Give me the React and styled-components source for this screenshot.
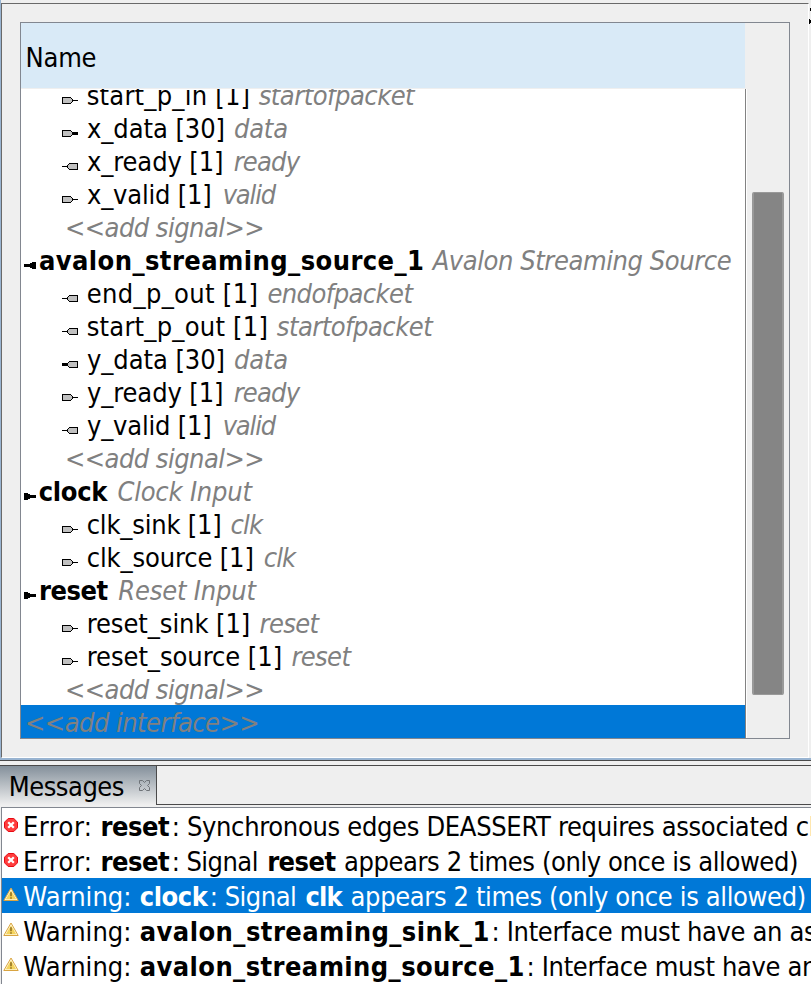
import React from "react";
import styled, { createGlobalStyle, css } from "styled-components";

const GlobalStyle = createGlobalStyle`
  * { box-sizing: border-box; }
  body {
    margin: 0;
    background: #efefef;
    color: #000;
    font-family: "DejaVu Sans Condensed", "DejaVu Sans", Tahoma, sans-serif;
    font-size: 27px;
    overflow: hidden;
  }
  svg { display: block; flex: none; }
`;

const Window = styled.div`
  position: relative;
  display: flex;
  flex-direction: column;
  width: 811px;
  height: 984px;
  overflow: hidden;
  background: #efefef;
`;

/* ---------- interface editor ---------- */

const EditorFrame = styled.section`
  display: flex;
  height: 760px;
  padding-top: 3px;
  border-left: 1px solid #99b4d1;
  border-bottom: 2px solid #99b4d1;
`;

const EditorPane = styled.div`
  width: 808px;
  padding: 18px 18px 0;
  border-top: 1px solid #696969;
  border-left: 1px solid #696969;
  border-right: 1px solid #fff;
  border-bottom: 1px solid #fff;
`;

const TreeTable = styled.div`
  display: flex;
  width: 770px;
  height: 717px;
  border: 1px solid #828790;
`;

const TreeColumn = styled.div`
  display: flex;
  flex-direction: column;
  width: 724px;
`;

const ColumnHeader = styled.div`
  height: 66px;
  padding: 1px 0 0 4.6px;
  line-height: 68px;
  background: #d9eaf7;
  border-bottom: 1px solid #efefef;
`;

const TreeBody = styled.div`
  display: flex;
  flex-direction: column;
  justify-content: flex-end;
  flex: 1;
  width: 725px;
  overflow: hidden;
  background: #fff;
  border-right: 1px solid #828282;
`;

const TreeRow = styled.div`
  display: flex;
  flex: none;
  align-items: flex-start;
  height: 33px;
  padding-left: ${(p) => p.$indent}px;
  line-height: 35px;
  background: ${(p) => (p.$selected ? "#0078d7" : "transparent")};
`;

const IconSlot = styled.span`
  flex: none;
  width: ${(p) => p.$width}px;
  padding-top: 19px;
`;

const Run = styled.span`
  flex: none;
  white-space: pre;
  margin-left: ${(p) => p.$gap || 0}px;
  letter-spacing: ${(p) => p.$track || 0}px;
  ${(p) => p.$kind === "bold" && css`font-weight: 700;`}
  ${(p) => p.$kind === "hint" && css`font-style: italic; color: #808080;`}
`;

const ScrollTrack = styled.div`
  flex: 1;
  margin: 66px 0 0 1px;
  padding: 103px 5px 0;
  border-left: 1px solid #fff;
`;

const ScrollThumb = styled.div`
  width: 32px;
  height: 503px;
  background: #858585;
  border: solid #999;
  border-width: 1px 2px;
  border-radius: 2px;
`;

/* Clipped cursor tip at the window's right edge. */
const EdgeGlyph = styled.svg`
  position: absolute;
  top: 7px;
  right: 0;
`;

/* ---------- messages ---------- */

const Divider = styled.div`
  height: 6px;
  border-top: 1px solid #4a4a4a;
  border-bottom: 1px solid #4a4a4a;
`;

const TabBar = styled.div`
  display: flex;
  height: 41px;
`;

const Tab = styled.div`
  display: flex;
  align-items: flex-start;
  width: 157px;
  height: 39px;
  padding-left: 8.8px;
  line-height: 41px;
  background: linear-gradient(#84909b, #efefef);
  border-right: 1px solid #4a4a4a;
`;

const TabCloseIcon = styled.svg`
  margin: 14px 0 0 15px;
`;

const TabFill = styled.div`
  flex: 1;
  height: 39px;
  border-bottom: 1px solid #4a4a4a;
`;

const MessageList = styled.div`
  flex: 1;
  margin-left: 1px;
  background: #fff;
  border-top: 1px solid #828790;
  border-left: 1px solid #828790;
  overflow: hidden;
`;

const MessageRow = styled.div`
  display: flex;
  height: 35px;
  line-height: 37px;
  color: ${(p) => (p.$selected ? "#fff" : "#000")};
  background: ${(p) => (p.$selected ? "#0078d7" : "transparent")};
`;

const StatusSlot = styled.span`
  flex: none;
  width: 21px;
  padding: ${(p) => (p.$level === "error" ? "10px 0 0 2px" : "9px 0 0 1px")};
`;

function PortIcon({ output, bus }) {
  return (
    <svg width="16" height="7" shapeRendering="crispEdges">
      <g transform={output ? "translate(16 0) scale(-1 1)" : undefined}>
        <path d="M0 0H9V1H10V2H11V5H10V6H9V7H0Z" fill="#000" />
        <path d="M1 1H9V2H10V5H9V6H1Z" fill="#c0c0c0" />
        <rect x="11" y={bus ? 2 : 3} width="5" height={bus ? 3 : 1} />
      </g>
    </svg>
  );
}

function InterfaceIcon({ source }) {
  return (
    <svg width="12" height="7" shapeRendering="crispEdges">
      <path
        d="M0 0H4V1H6V2H12V5H6V6H4V7H0Z"
        transform={source ? "translate(12 0) scale(-1 1)" : undefined}
      />
    </svg>
  );
}

function ErrorIcon() {
  return (
    <svg width="14" height="14" viewBox="0 0 14 14">
      <path d="M4.2 .5H9.8L13.5 4.2V9.8L9.8 13.5H4.2L.5 9.8V4.2Z" fill="#ff3c3c" stroke="#e60a14" />
      <path d="M4.2 4.2L9.8 9.8M9.8 4.2L4.2 9.8" stroke="#fff" strokeWidth="2.3" />
    </svg>
  );
}

function WarningIcon() {
  return (
    <svg width="16" height="15" viewBox="0 0 16 15">
      <path d="M8 1L15.2 13.5H.8Z" fill="#fff7d6" stroke="#d9a441" strokeLinejoin="round" />
      <path d="M8 3.6L13.2 12.3H2.8Z" fill="#f4d35c" />
      <path d="M8 5.2V9.3M8 10.2V11.8" stroke="#8a6a1c" strokeWidth="1.5" />
    </svg>
  );
}

const ROWS = [
  { port: {}, runs: [["start_p_in [1]", 0.22, "", 0.7], ["startofpacket", -0.52, "hint", 8.4]] },
  { port: { bus: true }, runs: [["x_data [30]", -0.08, "", 1], ["data", -0.2, "hint", 9]] },
  { port: { output: true }, runs: [["x_ready [1]", -0.12, "", 1], ["ready", -0.8, "hint", 10.3]] },
  { port: {}, runs: [["x_valid [1]", -0.2, "", 1], ["valid", -1.15, "hint", 11]] },
  { indent: 44, runs: [["<<add signal>>", -0.55, "hint"]] },
  { group: { source: true }, runs: [["avalon_streaming_source_1", 0.43, "bold", 0.4], ["Avalon Streaming Source", -0.42, "hint", 8.2]] },
  { port: { output: true }, runs: [["end_p_out [1]", 0.32, "", 0.7], ["endofpacket", -0.58, "hint", 9.2]] },
  { port: { output: true }, runs: [["start_p_out [1]", 0.22, "", 0.7], ["startofpacket", -0.52, "hint", 8.6]] },
  { port: { output: true, bus: true }, runs: [["y_data [30]", -0.08, "", 1], ["data", -0.2, "hint", 9]] },
  { port: {}, runs: [["y_ready [1]", -0.12, "", 1], ["ready", -0.8, "hint", 10.3]] },
  { port: { output: true }, runs: [["y_valid [1]", -0.2, "", 1], ["valid", -1.15, "hint", 11]] },
  { indent: 44, runs: [["<<add signal>>", -0.55, "hint"]] },
  { group: {}, runs: [["clock", -0.35, "bold", 0.3], ["Clock Input", -0.2, "hint", 10.4]] },
  { port: {}, runs: [["clk_sink [1]", -0.2, "", 0.7], ["clk", -0.9, "hint", 9]] },
  { port: {}, runs: [["clk_source [1]", -0.14, "", 0.7], ["clk", -0.9, "hint", 10]] },
  { group: {}, runs: [["reset", -0.48, "bold", 0.5], ["Reset Input", -0.17, "hint", 10.6]] },
  { port: {}, runs: [["reset_sink [1]", -0.08, "", 0.7], ["reset", -0.65, "hint", 9.4]] },
  { port: {}, runs: [["reset_source [1]", -0.06, "", 0.7], ["reset", -0.65, "hint", 9.4]] },
  { indent: 44, runs: [["<<add signal>>", -0.55, "hint"]] },
  { indent: 4, selected: true, runs: [["<<add interface>>", -0.53, "hint"]] },
];

const MESSAGES = [
  { level: "error", runs: [["Error:", 0.45], ["reset", -0.5, "bold", 8], [": Synchronous edges DEASSERT requires associated clock", -0.32, "", 2.6]] },
  { level: "error", runs: [["Error:", 0.45], ["reset", -0.5, "bold", 8], [": Signal", -0.54, "", 2.6], ["reset", -0.5, "bold", 9.3], ["appears 2 times (only once is allowed)", -0.4, "", 8.3]] },
  { level: "warning", selected: true, runs: [["Warning:", 0.05, "", 0.3], ["clock", -0.5, "bold", 8.3], [": Signal", -0.5, "", 2.5], ["clk", -0.9, "bold", 9.2], ["appears 2 times (only once is allowed)", -0.37, "", 8.9]] },
  { level: "warning", runs: [["Warning:", 0.05, "", 0.3], ["avalon_streaming_sink_1", 0.45, "bold", 8.2], [": Interface must have an associated reset", -0.35, "", 1.8]] },
  { level: "warning", runs: [["Warning:", 0.05, "", 0.3], ["avalon_streaming_source_1", 0.41, "bold", 8.2], [": Interface must have an associated reset", -0.35, "", 1.8]] },
];

const Runs = ({ items }) =>
  items.map(([text, track, kind, gap], i) => (
    <Run key={i} $track={track} $kind={kind} $gap={gap}>
      {text}
    </Run>
  ));

export default function App() {
  return (
    <Window>
      <GlobalStyle />
      <EditorFrame>
        <EditorPane>
          <TreeTable>
            <TreeColumn>
              <ColumnHeader>
                <Run $track={-0.24}>Name</Run>
              </ColumnHeader>
              <TreeBody>
                {ROWS.map((row, i) => (
                  <TreeRow
                    key={i}
                    $indent={row.port ? 41 : row.group ? 3 : row.indent}
                    $selected={row.selected}
                  >
                    {row.port && (
                      <IconSlot $width={24}>
                        <PortIcon {...row.port} />
                      </IconSlot>
                    )}
                    {row.group && (
                      <IconSlot $width={14.5}>
                        <InterfaceIcon {...row.group} />
                      </IconSlot>
                    )}
                    <Runs items={row.runs} />
                  </TreeRow>
                ))}
              </TreeBody>
            </TreeColumn>
            <ScrollTrack>
              <ScrollThumb />
            </ScrollTrack>
          </TreeTable>
        </EditorPane>
      </EditorFrame>
      <EdgeGlyph width="2" height="18" shapeRendering="crispEdges">
        <path d="M1 1H2V4H1ZM0 12H1V13H2V16H1V17H0Z" />
      </EdgeGlyph>

      <Divider />
      <TabBar>
        <Tab>
          <Run $track={-0.5}>Messages</Run>
          <TabCloseIcon width="11" height="11" viewBox="0 0 11 11">
            <path
              d="M.5 .5H3.5L5.5 2.5L7.5 .5H10.5V3.5L8.5 5.5L10.5 7.5V10.5H7.5L5.5 8.5L3.5 10.5H.5V7.5L2.5 5.5L.5 3.5Z"
              fill="none"
              stroke="#6e7378"
            />
          </TabCloseIcon>
        </Tab>
        <TabFill />
      </TabBar>
      <MessageList>
        {MESSAGES.map((m, i) => (
          <MessageRow key={i} $selected={m.selected}>
            <StatusSlot $level={m.level}>
              {m.level === "error" ? <ErrorIcon /> : <WarningIcon />}
            </StatusSlot>
            <Runs items={m.runs} />
          </MessageRow>
        ))}
      </MessageList>
    </Window>
  );
}
